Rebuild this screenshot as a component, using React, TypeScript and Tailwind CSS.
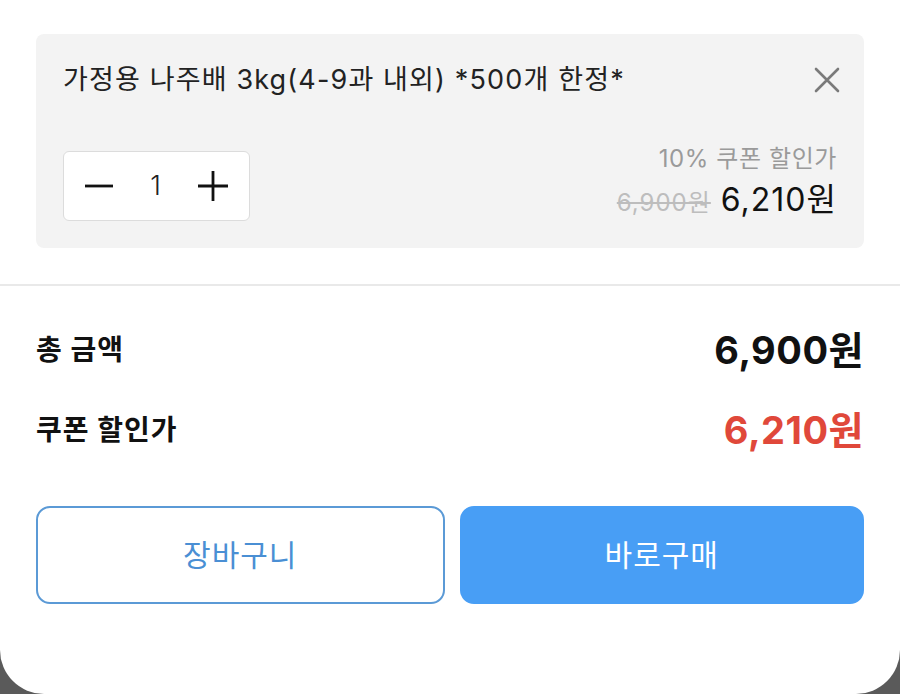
export default function App() {
  return (
    <div className="w-[900px] h-[694px] bg-[#5a5a5a] overflow-hidden" style={{ fontFamily: 'Inter, "Noto Sans CJK KR", sans-serif' }}>
      <div className="h-full bg-white rounded-b-[44px] flex flex-col">
        {/* Cart item */}
        <div className="px-9 pt-[34px]">
          <div className="bg-[#f3f3f3] rounded-lg h-[214px] pl-[27px] pr-[23px] pt-[28px] flex flex-col">
            <div className="flex items-center justify-between">
              <div className="text-[27px] leading-[36px] text-[#222] tracking-[1.15px]">가정용 나주배 3kg(4-9과 내외) *500개 한정*</div>
              <svg width="28" height="28" viewBox="0 0 28 28">
                <path d="M3 3L25 25M25 3L3 25" stroke="#7a7a7a" strokeWidth="2.6" strokeLinecap="round" />
              </svg>
            </div>
            <div className="flex-1 flex items-end justify-between pb-[27px]">
              <div className="w-[187px] h-[70px] bg-white border border-[#dcdcdc] rounded-md flex items-center justify-between px-[20px]">
                <svg width="30" height="30" viewBox="0 0 30 30">
                  <path d="M1 15H29" stroke="#111" strokeWidth="2.8" />
                </svg>
                <span className="text-[27px] font-light text-[#222]">1</span>
                <svg width="32" height="32" viewBox="0 0 32 32">
                  <path d="M1 16H31M16 1V31" stroke="#111" strokeWidth="2.8" />
                </svg>
              </div>
              <div className="flex flex-col items-end pr-[4px]">
                <div className="text-[24px] leading-[30px] text-[#9a9a9a] tracking-[0.6px]">10% 쿠폰 할인가</div>
                <div className="flex items-baseline gap-[10px] mt-[6px]">
                  <span className="text-[24px] text-[#bdbdbd] line-through tracking-[1px]">6,900원</span>
                  <span className="text-[32px] leading-[40px] text-[#111] tracking-[1px]">6,210원</span>
                </div>
              </div>
            </div>
          </div>
        </div>

        <div className="h-[2px] bg-[#e9e9e9] mt-[36px]" />

        {/* Totals */}
        <div className="px-9 pt-[44px] flex flex-col gap-[40px]">
          <div className="flex items-center justify-between">
            <span className="text-[28px] leading-[40px] font-bold text-[#111] tracking-[1px]">총 금액</span>
            <span className="text-[38px] leading-[40px] font-bold text-[#111] tracking-[0.5px]">6,900원</span>
          </div>
          <div className="flex items-center justify-between">
            <span className="text-[28px] leading-[40px] font-bold text-[#111] tracking-[1px]">쿠폰 할인가</span>
            <span className="text-[38px] leading-[40px] font-bold text-[#e0483a] tracking-[0.5px]">6,210원</span>
          </div>
        </div>

        {/* Actions */}
        <div className="px-9 mt-[56px] flex gap-[15px]">
          <button className="flex-1 h-[98px] border-2 border-[#5b9ad6] rounded-[14px] bg-white text-[30px] text-[#4a8fd4] tracking-[1px]">장바구니</button>
          <button className="flex-1 h-[98px] rounded-[14px] bg-[#489ef5] text-[30px] text-white tracking-[1px]">바로구매</button>
        </div>
      </div>
    </div>
  );
}
